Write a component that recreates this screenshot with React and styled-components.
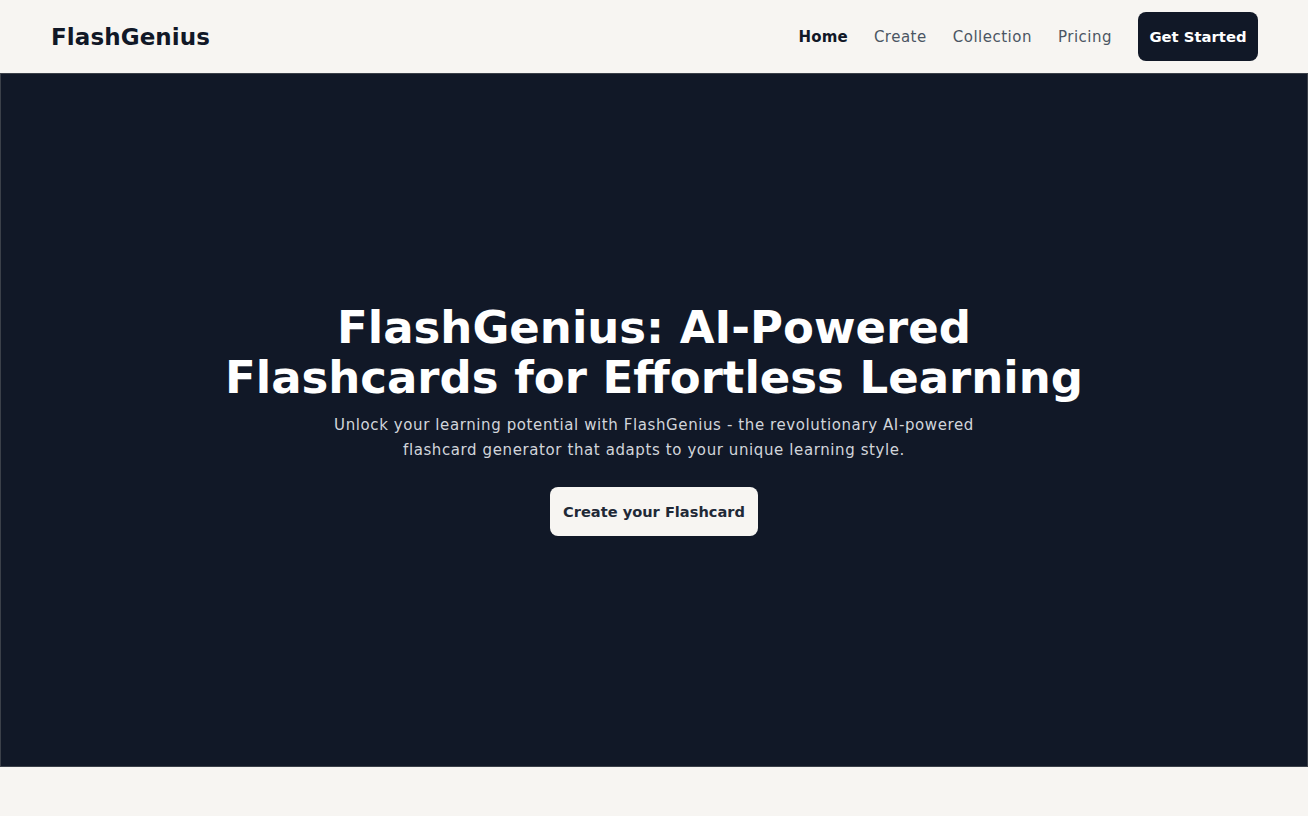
import React from "react";
import styled, { createGlobalStyle } from "styled-components";

const Global = createGlobalStyle`
  html, body { margin: 0; padding: 0; }
  body {
    background: #f7f5f2;
    font-family: "DejaVu Sans", "Noto Sans", sans-serif;
    -webkit-font-smoothing: antialiased;
  }
  * { box-sizing: border-box; }
`;

const Page = styled.div`
  min-height: 816px;
  display: flex;
  flex-direction: column;
  background: #f7f5f2;
`;

const Header = styled.header`
  height: 73px;
  display: flex;
  align-items: center;
  justify-content: space-between;
  padding: 0 50px 0 51px;
  background: #f7f5f2;
`;

const Logo = styled.div`
  font-size: 23px;
  font-weight: 700;
  color: #111827;
  letter-spacing: 0.1px;
`;

const Nav = styled.nav`
  display: flex;
  align-items: center;
  gap: 26px;
`;

const NavLink = styled.a`
  font-size: 15px;
  letter-spacing: ${(p) => (p.$active ? "0.2px" : "0.5px")};
  font-weight: ${(p) => (p.$active ? 700 : 400)};
  color: ${(p) => (p.$active ? "#111827" : "#4b5563")};
  text-decoration: none;
`;

const DarkButton = styled.button`
  height: 49px;
  width: 120px;
  padding: 0;
  border: none;
  border-radius: 8px;
  background: #111827;
  color: #ffffff;
  font-family: inherit;
  font-size: 14.8px;
  font-weight: 700;
`;

const Hero = styled.section`
  height: 694px;
  background: #111827;
  border: 1px solid #3b4049;
  display: flex;
  flex-direction: column;
  align-items: center;
  justify-content: center;
  text-align: center;
  padding-bottom: 2px;
`;

const Title = styled.h1`
  margin: 0;
  font-size: 45px;
  line-height: 50px;
  font-weight: 700;
  color: #ffffff;
`;

const Subtitle = styled.p`
  margin: 10px 0 0;
  max-width: 670px;
  font-size: 15px;
  letter-spacing: 0.6px;
  line-height: 25px;
  color: #d1d5db;
`;

const LightButton = styled.button`
  margin-top: 24px;
  height: 49px;
  width: 208px;
  padding: 0;
  border: none;
  border-radius: 8px;
  background: #f7f5f2;
  color: #1f2937;
  font-family: inherit;
  font-size: 14.6px;
  font-weight: 700;
`;

export default function App() {
  return (
    <>
      <Global />
      <Page>
        <Header>
          <Logo>FlashGenius</Logo>
          <Nav>
            <NavLink $active>Home</NavLink>
            <NavLink>Create</NavLink>
            <NavLink>Collection</NavLink>
            <NavLink>Pricing</NavLink>
            <DarkButton>Get Started</DarkButton>
          </Nav>
        </Header>
        <Hero>
          <Title>
            FlashGenius: AI-Powered
            <br />
            Flashcards for Effortless Learning
          </Title>
          <Subtitle>
            Unlock your learning potential with FlashGenius - the revolutionary AI-powered
            flashcard generator that adapts to your unique learning style.
          </Subtitle>
          <LightButton>Create your Flashcard</LightButton>
        </Hero>
      </Page>
    </>
  );
}
